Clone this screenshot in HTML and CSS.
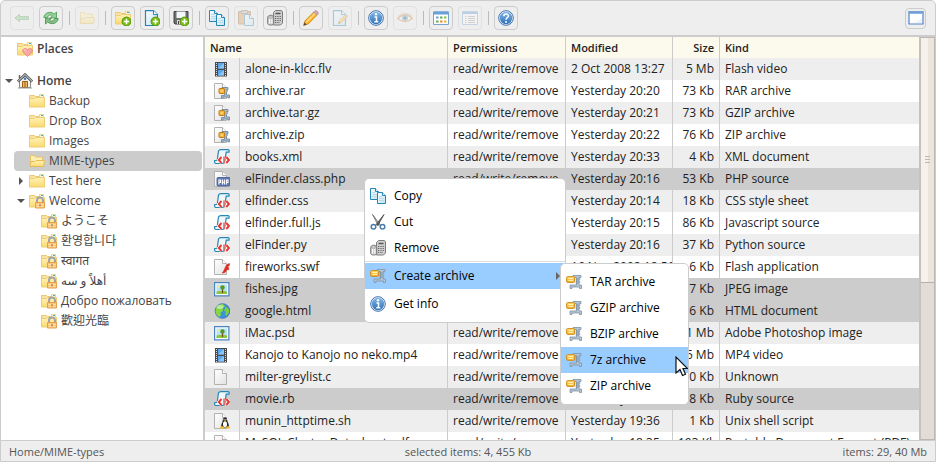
FILE: index.html
```html
<!DOCTYPE html>
<html lang="en">
<head>
<meta charset="utf-8">
<title>File manager</title>
<link rel="stylesheet" href="styles.css">
</head>
<body>
<svg class="sprite" width="0" height="0" aria-hidden="true">
  <defs>
    <linearGradient id="gFolder" x1="0" y1="0" x2="0" y2="1"><stop offset="0" stop-color="#fff2ba"/><stop offset="1" stop-color="#fcd96c"/></linearGradient>
    <linearGradient id="gBlue" x1="0" y1="0" x2="0" y2="1"><stop offset="0" stop-color="#85b8e6"/><stop offset="1" stop-color="#2b6fbb"/></linearGradient>
    <linearGradient id="gSheet" x1="0" y1="0" x2="1" y2="1"><stop offset="0" stop-color="#ffffff"/><stop offset="1" stop-color="#e2e2e2"/></linearGradient>
    <linearGradient id="gSheetBlue" x1="0" y1="0" x2="1" y2="1"><stop offset="0" stop-color="#ffffff"/><stop offset="1" stop-color="#bfe3f5"/></linearGradient>
    <linearGradient id="gOrange" x1="0" y1="0" x2="0" y2="1"><stop offset="0" stop-color="#ffdc70"/><stop offset="1" stop-color="#f6ab2c"/></linearGradient>
  </defs>
  <symbol id="folder" viewBox="0 0 16 16">
    <path d="M.5 13V2.500h5l1 1h8V13z" fill="#f9e3a0" stroke="#e9ca7c"/>
    <path d="M10.500 1.500h4v4h-4z" fill="#fff6d0" stroke="#ecd390"/>
    <path d="M12 2.500h2" stroke="#35b6c4"/>
    <path d="M.5 5.500h5l1-1h9v9.500H.5z" fill="url(#gFolder)" stroke="#efcd74"/>
  </symbol>
  <symbol id="folder-open" viewBox="0 0 16 16">
    <path d="M1.500 13V2.500h4l1 1.500h7V13z" fill="#fdeeb4" stroke="#e6c56c"/>
    <path d="M1 13.500l1-5h4l1-1h8.500l-1 6z" fill="url(#gFolder)" stroke="#e5bb58"/>
  </symbol>
  <symbol id="lock" viewBox="0 0 16 16">
    <path d="M8 10V7.500a3 3 0 0 1 6 0V10" fill="none" stroke="#9ea3a8" stroke-width="2"/>
    <path d="M6.500 9.500h9v5.500h-9z" fill="#f9c67a" stroke="#e3a050"/>
    <path d="M7.500 11.500h7M7.500 13.500h7" stroke="#fce0a8"/>
    <path d="M11 11v2.500" stroke="#9a6c30"/>
  </symbol>
  <symbol id="heart" viewBox="0 0 16 16">
    <path d="M10.500 15.500L6 11c-1.500-2.500 2-5 4.500-2.200C13 6 16.800 8.500 15 11z" fill="#f8a8a6" stroke="#e78482" stroke-width=".8"/>
    <path d="M7 9.500q1-1.500 2.500 0" fill="none" stroke="#ffd0d0"/>
  </symbol>
  <symbol id="home" viewBox="0 0 16 16">
    <path d="M2.500 14.500V8L8 3l5.500 5v6.500z" fill="#f3f1ea" stroke="#8a8a8a"/>
    <path d="M2.500 2v3" stroke="#666" stroke-width="1.500"/>
    <path d="M.8 8.500L8 1.500l7.200 7" fill="none" stroke="#555" stroke-width="2.600"/>
    <path d="M.8 8.500L8 1.500l7.200 7" fill="none" stroke="#e6e6e6" stroke-width="1"/>
    <path d="M5.500 14.500v-6h5v6z" fill="#f0b95d" stroke="#9a5f17"/><path d="M8 9v5" stroke="#9a5f17"/>
    <circle cx="8" cy="5.800" r="1.300" fill="#3c79c0"/>
    <path d="M1 15h14" stroke="#999"/>
  </symbol>
  <symbol id="plus" viewBox="0 0 16 16">
    <circle cx="11.500" cy="11.500" r="4.500" fill="#78bd10" stroke="#4b8a06" stroke-width=".8"/>
    <path d="M11.500 8.800v5.400M8.800 11.500h5.400" stroke="#fff" stroke-width="1.600"/>
  </symbol>
  <symbol id="back" viewBox="0 0 16 16">
    <path d="M1 8l4.500-3.500v2.200h9v2.600h-9v2.200z" fill="#8fd08f" stroke="#4f9a58"/>
  </symbol>
  <symbol id="reload" viewBox="0 0 16 16">
    <path d="M.8 7.500C1.500 2.500 7.500.8 11.300 4L13.500 2v5.800h-6l2-2C7.500 4.200 5 5 4.500 7.500z" fill="#9ad09a" stroke="#55a05e" stroke-width=".9"/>
    <path d="M15.200 8.500C14.500 13.500 8.500 15.200 4.700 12l-2.200 2V8.200h6l-2 2c2 1.600 4.500.8 5-1.700z" fill="#84c284" stroke="#4c9455" stroke-width=".9"/>
  </symbol>
  <symbol id="page-blue" viewBox="0 0 16 16">
    <path d="M1.500.6h8l4 4v10.900h-12z" fill="url(#gSheetBlue)" stroke="#2685b5" stroke-width="1.200"/>
    <path d="M9.500.6v4h4" fill="#fff" stroke="#2685b5"/>
  </symbol>
  <symbol id="floppy" viewBox="0 0 16 16">
    <path d="M1 1.500h14v12.500H2l-1-1z" fill="#6e6e6e" stroke="#444"/>
    <path d="M3.500 1.500h9V8h-9z" fill="#f2f7fa"/><path d="M4 10h7v4H4z" fill="#ddd"/><path d="M5.500 11v3" stroke="#444"/>
  </symbol>
  <symbol id="copy" viewBox="0 0 16 16">
    <path d="M.5.500h5l3 3v8h-8z" fill="url(#gSheetBlue)" stroke="#2685b5"/>
    <path d="M2 4.500h3M2 6.500h5M2 8.500h5" stroke="#b8dcec"/><path d="M5.500.500v3h3" fill="#fff" stroke="#2685b5"/>
    <path d="M7.500 4.500h5l3 3v8h-8z" fill="url(#gSheetBlue)" stroke="#2685b5"/>
    <path d="M9 8.500h3M9 10.500h5M9 12.500h5" stroke="#b8dcec"/><path d="M12.500 4.500v3h3" fill="#fff" stroke="#2685b5"/>
  </symbol>
  <symbol id="paste" viewBox="0 0 16 16">
    <path d="M.5 1.500h12v12.500H.5z" fill="#d99c55" stroke="#a06a30"/>
    <path d="M3.500.500h6v3h-6z" fill="#bbb" stroke="#777"/>
    <path d="M6.500 4.500h5l4 4v7h-9z" fill="url(#gSheetBlue)" stroke="#3b82ab"/><path d="M11.500 4.500v4h4" fill="#fff" stroke="#3b82ab"/>
  </symbol>
  <symbol id="remove" viewBox="0 0 16 16">
    <path d="M6.500 2.500l2-2h6l1 1.500v11l-2 2h-7z" fill="#cfcfcf" stroke="#7c7c7c"/>
    <path d="M8.500 3.500h5" stroke="#555" stroke-width="1.500"/>
    <path d="M8 6.500h6M8 8.500h6M8 10.500h6M8 12.500h5" stroke="#666" stroke-dasharray="1.300 1"/>
    <path d="M.7 7.500c0-3 6-3 6 0v6c0 2-6 2-6 0z" fill="#d2d2d2" stroke="#777"/>
    <ellipse cx="3.700" cy="7" rx="2.500" ry="1" fill="#eee" stroke="#888" stroke-width=".7"/>
    <path d="M2.500 9v4.500M4.800 9v4.500" stroke="#fff" stroke-width=".9"/>
  </symbol>
  <symbol id="pencil" viewBox="0 0 16 16">
    <path d="M.6 15.400l1.400-4.600L10.800 2l3.200 3.200-8.800 8.800z" fill="#ffb52e" stroke="#c98118" stroke-width=".8"/>
    <path d="M3.500 12L12 3.500" stroke="#ffe08a" stroke-width="1.200"/>
    <path d="M10.800 2l1.300-1.300c1-1 4.200 2.200 3.200 3.200L14 5.200z" fill="#e99aa8" stroke="#a8a8b4" stroke-width=".9"/>
    <path d="M.6 15.400l.9-3 2.100 2.100z" fill="#444"/>
  </symbol>
  <symbol id="info" viewBox="0 0 16 16">
    <circle cx="8" cy="8" r="7.300" fill="#fff" stroke="#3b6da8"/>
    <circle cx="8" cy="8" r="6.200" fill="url(#gBlue)"/>
    <path d="M6.500 7h2v4.500M6.300 11.700h4" fill="none" stroke="#fff" stroke-width="1.500"/><circle cx="8" cy="4.300" r="1.200" fill="#fff"/>
  </symbol>
  <symbol id="help" viewBox="0 0 16 16">
    <circle cx="8" cy="8" r="7.300" fill="#fff" stroke="#3b6da8"/>
    <circle cx="8" cy="8" r="6.200" fill="url(#gBlue)"/>
    <path d="M5.800 6.300c0-3 4.600-3 4.600-.3C10.400 7.600 8 7.600 8 9.700" fill="none" stroke="#fff" stroke-width="1.500"/><circle cx="8" cy="11.900" r="1" fill="#fff"/>
  </symbol>
  <symbol id="eye" viewBox="0 0 16 16">
    <path d="M.7 8.500q7.300-7.500 14.600 0-7.300 6-14.600 0z" fill="#fff" stroke="#d08a40" stroke-width="1.300"/>
    <path d="M1 6q7-5 14 0" fill="none" stroke="#e0b080"/>
    <circle cx="8" cy="8" r="3" fill="#6f9fc0"/><circle cx="8" cy="8" r="1.300" fill="#1f3f5a"/>
  </symbol>
  <symbol id="window" viewBox="0 0 16 16">
    <path d="M1 2h14v12H1z" fill="#fff" stroke="#5584c4" stroke-width="1.200"/>
    <path d="M1 2h14v2H1z" fill="#8db6e8"/><path d="M.5 2h15" stroke="#5584c4"/>
    <path d="M6 13l8-5v5z" fill="#edf2f9"/>
  </symbol>
  <symbol id="view-icons" viewBox="0 0 16 16">
    <path d="M.5 2h15v12.500H.5z" fill="#fff" stroke="#7aa3cf"/>
    <path d="M.5 1.500h15V4.500H.5z" fill="#6b9fd8"/>
    <path d="M3 6.500h2.500v2H3z" fill="#6a9edb"/><path d="M7 6.500h2.500v2H7zM3 10.500h2.500v2H3z" fill="#66b04c"/><path d="M11 6.500h2.500v2H11z" fill="#86bd4c"/><path d="M7 10.500h2.500v2H7z" fill="#f08a36"/><path d="M11 10.500h2.500v2H11z" fill="#e4b63c"/>
  </symbol>
  <symbol id="view-list" viewBox="0 0 16 16">
    <path d="M.5 2h15v12.500H.5z" fill="#fff" stroke="#7aa3cf"/><path d="M.5 1.500h15V4H.5z" fill="#5b92cf"/>
    <path d="M3 6.500h1.500M3 8.500h1.500M3 10.500h1.500M3 12.500h1.500M6 6.500h7M6 8.500h7M6 10.500h7M6 12.500h7" stroke="#999"/>
  </symbol>
  <symbol id="film" viewBox="0 0 16 16">
    <path d="M1 1h12v14.500H1z" fill="#4a4a4a"/>
    <path d="M4 2h6v5.500H4zM4 9h6v5.500H4z" fill="#58a6ee"/><path d="M4 7.500L10 2v5.500zM4 14.500L10 9v5.500z" fill="#8cc6f8"/>
    <path d="M2.500 2v13M11.500 2v13" stroke="#ddd" stroke-width="1" stroke-dasharray="1 1"/>
  </symbol>
  <symbol id="page" viewBox="0 0 16 16">
    <path d="M.5.500h8l4 4v11H.5z" fill="url(#gSheet)" stroke="#b2b2b2"/>
    <path d="M8.500.500v4h4" fill="#fff" stroke="#b2b2b2"/>
  </symbol>
  <symbol id="clamp" viewBox="0 0 16 16">
    <path d="M7 1.500h8v2h-2l1 1.500-1 1.500 1 1.500-1 1.500v1.500h2.500v3.500h-2V13H6v1.500H4V11h6.500V3.500H7z" fill="#b4c5d3" stroke="#7d93a6" stroke-width=".8"/>
    <path d="M9.500 5h3.500M9.500 7h3.500M9.500 9h3.500" stroke="#71889c" stroke-width=".8"/>
    <rect x=".6" y="2.600" width="8" height="5.800" rx="1" fill="url(#gOrange)" stroke="#d08f1e"/>
    <path d="M2.500 4.500h4.500M2.500 6.500h4.500" stroke="#fff3b0"/>
  </symbol>
  <symbol id="archive-file" viewBox="0 0 16 16">
    <use href="#page"/>
    <path d="M8 4.500h6v2h-1.500l1 1.500-1 1.500v2.500h3v3H14v-1H9v1H7.500v-2.500h3V6.500H8z" fill="#a9bccc" stroke="#6b8399" stroke-width=".8"/>
    <rect x="5" y="5.500" width="5.500" height="5" rx="1" fill="#f5b53a" stroke="#c07c10"/><path d="M6.500 8h2.500" stroke="#fff0a0"/>
  </symbol>
  <symbol id="script" viewBox="0 0 16 16">
    <path d="M4.500 2Q5 .6 7 .6h7q1.500 0 1 2.600h-2.800L11 11q-.5 3.500-3 3.500H2Q.2 14.500.7 11.500h2.500z" fill="#eef8fc" stroke="#2786b4" stroke-width="1.200"/>
    <path d="M7.500 8L4.800 11l2.700 3M12.300 8l2.700 3-2.700 3" fill="none" stroke="#fff" stroke-width="3.200"/>
    <path d="M7.500 8L4.800 11l2.700 3M12.300 8l2.700 3-2.700 3" fill="none" stroke="#e3362e" stroke-width="1.900"/>
    <path d="M10 7.500v7" stroke="#ee6a62" stroke-width="1.600"/>
  </symbol>
  <symbol id="php" viewBox="0 0 16 16">
    <use href="#page"/>
    <rect x="3" y="6.500" width="13" height="8.500" rx="1" fill="#6078b4" stroke="#405898" stroke-width=".8"/>
    <path d="M4.900 13.500v-4.500h1.600v2.500H4.900M8.400 8.500v5M10.400 8.500v5M8.400 11.300h2M12.400 13.500v-4.500H14v2.500h-1.600" fill="none" stroke="#fff" stroke-width="1.100"/>
  </symbol>
  <symbol id="swf" viewBox="0 0 16 16">
    <use href="#page"/>
    <path d="M15.500 4.500c-4.500.5-4 6-7.300 9.500 3 .5 4-2 4.600-3.300h2V8.500h-1c.3-1.200.9-1.900 1.700-2z" fill="#e52b20" stroke="#c82a22" stroke-width=".5"/>
  </symbol>
  <symbol id="image" viewBox="0 0 16 16">
    <path d="M.6 1.600h14.300v13.300H.6z" fill="#fff" stroke="#4a84be" stroke-width="1.200"/>
    <path d="M2.500 3.500h10.500v9.500H2.500z" fill="#b4e2f8"/><path d="M2.500 10.500q5-1.500 10.500 0V13H2.500z" fill="#8cc63c"/>
    <path d="M8.500 7.500v4.500" stroke="#754a18" stroke-width="1.200"/><circle cx="8.500" cy="6.500" r="2.200" fill="#5a9624"/><circle cx="4.500" cy="5.500" r="1" fill="#fff58a"/>
  </symbol>
  <symbol id="globe" viewBox="0 0 16 16">
    <circle cx="8.500" cy="8" r="7.300" fill="#3c90e0" stroke="#2f70b4" stroke-width=".8"/>
    <path d="M2.500 4Q5 .8 9 1l2 2-2.500 2.500L9 8 6.500 9.500 7 12l-1.500 2Q1.500 12 1.500 8z" fill="#86d840"/>
    <path d="M12 3.500l3 3v3L12.500 13 11 11l1-2-2-1.500z" fill="#78cf38"/>
    <ellipse cx="6" cy="4" rx="3.500" ry="2" fill="#fff" opacity=".45"/>
  </symbol>
  <symbol id="shell" viewBox="0 0 16 16">
    <use href="#page"/>
    <path d="M11 4.500c2.500 0 2 2.500 2.500 4 .7 1.500 2 3 1 6h-7c-1-2.500.6-4.500 1-6 .5-1.500 0-4 2.500-4z" fill="#25282b"/>
    <ellipse cx="11" cy="11.300" rx="2" ry="3" fill="#fff"/><path d="M9.800 7.500h2.500L11 9z" fill="#f4bd22"/>
    <ellipse cx="8" cy="14.500" rx="2" ry="1.200" fill="#f4bd22"/><ellipse cx="14" cy="14.500" rx="2" ry="1.200" fill="#f4bd22"/>
    <circle cx="10" cy="6.500" r=".6" fill="#fff"/><circle cx="12" cy="6.500" r=".6" fill="#fff"/>
  </symbol>
  <symbol id="pdf" viewBox="0 0 16 16">
    <use href="#page"/><path d="M4 14c3-3 5-6 4-9 1 5 3 7 6 7-4 0-7 1-10 2z" fill="none" stroke="#d7261d" stroke-width="1.500"/>
  </symbol>
  <symbol id="cut" viewBox="0 0 16 16">
    <path d="M2.500.5l7.500 10-1.800.8z" fill="#c5cacf" stroke="#666" stroke-width=".8"/>
    <path d="M14 .5L6.200 10.500l1.600 1z" fill="#5c6064" stroke="#444" stroke-width=".8"/>
    <circle cx="3.500" cy="12.800" r="2.300" fill="none" stroke="#4a7cab" stroke-width="1.500"/><circle cx="12.500" cy="12.800" r="2.300" fill="none" stroke="#4a7cab" stroke-width="1.500"/>
  </symbol>
</svg>

<div class="finder">
  <header class="toolbar">
    <div class="group">
      <button class="tool disabled" disabled aria-label="Back"><svg class="icon"><use href="#back"/></svg></button>
      <button class="tool" aria-label="Reload"><svg class="icon"><use href="#reload"/></svg></button>
    </div>
    <div class="group">
      <button class="tool disabled" disabled aria-label="Open"><svg class="icon"><use href="#folder-open"/></svg></button>
    </div>
    <div class="group">
      <button class="tool" aria-label="New folder"><svg class="icon"><use href="#folder"/><use href="#plus"/></svg></button>
      <button class="tool" aria-label="New file"><svg class="icon"><use href="#page-blue"/><use href="#plus"/></svg></button>
      <button class="tool" aria-label="Upload files"><svg class="icon"><use href="#floppy"/><use href="#plus"/></svg></button>
    </div>
    <div class="group">
      <button class="tool" aria-label="Copy"><svg class="icon"><use href="#copy"/></svg></button>
      <button class="tool disabled" disabled aria-label="Paste"><svg class="icon"><use href="#paste"/></svg></button>
      <button class="tool" aria-label="Remove"><svg class="icon"><use href="#remove"/></svg></button>
    </div>
    <div class="group">
      <button class="tool" aria-label="Rename"><svg class="icon"><use href="#pencil"/></svg></button>
      <button class="tool disabled" disabled aria-label="Edit text file"><svg class="icon"><use href="#page-blue"/><use href="#pencil" x="6" y="4" width="10" height="10"/></svg></button>
    </div>
    <div class="group">
      <button class="tool" aria-label="Get info"><svg class="icon"><use href="#info"/></svg></button>
      <button class="tool disabled" disabled aria-label="Preview"><svg class="icon"><use href="#eye"/></svg></button>
    </div>
    <div class="group">
      <button class="tool" aria-label="View as icons"><svg class="icon"><use href="#view-icons"/></svg></button>
      <button class="tool disabled" disabled aria-label="View as list"><svg class="icon"><use href="#view-list"/></svg></button>
    </div>
    <div class="group">
      <button class="tool" aria-label="Help"><svg class="icon"><use href="#help"/></svg></button>
    </div>
    <button class="tool dock" aria-label="Dock window"><svg class="icon"><use href="#window"/></svg></button>
  </header>

  <main class="workzone">
    <nav class="sidebar" aria-label="Folders">
      <ul class="tree places">
        <li><a href="#" class="node root"><span class="arrow"></span><svg class="icon"><use href="#folder"/><use href="#heart"/></svg>Places</a></li>
      </ul>
      <ul class="tree">
        <li><a href="#" class="node root"><span class="arrow open"></span><svg class="icon"><use href="#home"/></svg>Home</a>
          <ul>
            <li><a href="#" class="node"><span class="arrow"></span><svg class="icon"><use href="#folder"/></svg>Backup</a></li>
            <li><a href="#" class="node"><span class="arrow"></span><svg class="icon"><use href="#folder"/></svg>Drop Box</a></li>
            <li><a href="#" class="node"><span class="arrow"></span><svg class="icon"><use href="#folder"/></svg>Images</a></li>
            <li><a href="#" class="node current"><span class="arrow"></span><svg class="icon"><use href="#folder-open"/></svg>MIME-types</a></li>
            <li><a href="#" class="node"><span class="arrow closed"></span><svg class="icon"><use href="#folder"/></svg>Test here</a></li>
            <li><a href="#" class="node"><span class="arrow open"></span><svg class="icon"><use href="#folder"/><use href="#lock"/></svg>Welcome</a>
              <ul>
                <li><a href="#" class="node" lang="ja"><span class="arrow"></span><svg class="icon"><use href="#folder"/><use href="#lock"/></svg>ようこそ</a></li>
                <li><a href="#" class="node" lang="ko"><span class="arrow"></span><svg class="icon"><use href="#folder"/><use href="#lock"/></svg>환영합니다</a></li>
                <li><a href="#" class="node" lang="hi"><span class="arrow"></span><svg class="icon"><use href="#folder"/><use href="#lock"/></svg>स्वागत</a></li>
                <li><a href="#" class="node" lang="ar"><span class="arrow"></span><svg class="icon"><use href="#folder"/><use href="#lock"/></svg>أهلاً و سه</a></li>
                <li><a href="#" class="node" lang="ru"><span class="arrow"></span><svg class="icon"><use href="#folder"/><use href="#lock"/></svg>Добро пожаловать</a></li>
                <li><a href="#" class="node" lang="zh-Hant"><span class="arrow"></span><svg class="icon"><use href="#folder"/><use href="#lock"/></svg>歡迎光臨</a></li>
              </ul>
            </li>
          </ul>
        </li>
      </ul>
    </nav>

    <section class="files">
      <table>
        <colgroup><col class="c-icon"><col class="c-name"><col class="c-perm"><col class="c-date"><col class="c-size"><col></colgroup>
        <thead>
          <tr><th colspan="2">Name</th><th>Permissions</th><th>Modified</th><th class="size">Size</th><th>Kind</th></tr>
        </thead>
        <tbody>
          <tr><td><svg class="icon"><use href="#film"/></svg></td><td>alone-in-klcc.flv</td><td>read/write/remove</td><td>2 Oct 2008 13:27</td><td class="size">5 Mb</td><td>Flash video</td></tr>
          <tr><td><svg class="icon"><use href="#archive-file"/></svg></td><td>archive.rar</td><td>read/write/remove</td><td>Yesterday 20:20</td><td class="size">73 Kb</td><td>RAR archive</td></tr>
          <tr><td><svg class="icon"><use href="#archive-file"/></svg></td><td>archive.tar.gz</td><td>read/write/remove</td><td>Yesterday 20:21</td><td class="size">73 Kb</td><td>GZIP archive</td></tr>
          <tr><td><svg class="icon"><use href="#archive-file"/></svg></td><td>archive.zip</td><td>read/write/remove</td><td>Yesterday 20:22</td><td class="size">76 Kb</td><td>ZIP archive</td></tr>
          <tr><td><svg class="icon"><use href="#script"/></svg></td><td>books.xml</td><td>read/write/remove</td><td>Yesterday 20:33</td><td class="size">4 Kb</td><td>XML document</td></tr>
          <tr class="selected"><td><svg class="icon"><use href="#php"/></svg></td><td>elFinder.class.php</td><td>read/write/remove</td><td>Yesterday 20:16</td><td class="size">53 Kb</td><td>PHP source</td></tr>
          <tr><td><svg class="icon"><use href="#script"/></svg></td><td>elfinder.css</td><td>read/write/remove</td><td>Yesterday 20:14</td><td class="size">18 Kb</td><td>CSS style sheet</td></tr>
          <tr><td><svg class="icon"><use href="#script"/></svg></td><td>elfinder.full.js</td><td>read/write/remove</td><td>Yesterday 20:15</td><td class="size">86 Kb</td><td>Javascript source</td></tr>
          <tr><td><svg class="icon"><use href="#script"/></svg></td><td>elFinder.py</td><td>read/write/remove</td><td>Yesterday 20:16</td><td class="size">37 Kb</td><td>Python source</td></tr>
          <tr><td><svg class="icon"><use href="#swf"/></svg></td><td>fireworks.swf</td><td>read/write/remove</td><td>16 Nov 2008 18:56</td><td class="size">6 Kb</td><td>Flash application</td></tr>
          <tr class="selected"><td><svg class="icon"><use href="#image"/></svg></td><td>fishes.jpg</td><td>read/write/remove</td><td>Yesterday 20:16</td><td class="size">37 Kb</td><td>JPEG image</td></tr>
          <tr class="selected"><td><svg class="icon"><use href="#globe"/></svg></td><td>google.html</td><td>read/write/remove</td><td>Yesterday 20:16</td><td class="size">6 Kb</td><td>HTML document</td></tr>
          <tr><td><svg class="icon"><use href="#image"/></svg></td><td>iMac.psd</td><td>read/write/remove</td><td>Yesterday 20:16</td><td class="size">1 Mb</td><td>Adobe Photoshop image</td></tr>
          <tr><td><svg class="icon"><use href="#film"/></svg></td><td>Kanojo to Kanojo no neko.mp4</td><td>read/write/remove</td><td>Yesterday 20:16</td><td class="size">15 Mb</td><td>MP4 video</td></tr>
          <tr><td><svg class="icon"><use href="#page"/></svg></td><td>milter-greylist.c</td><td>read/write/remove</td><td>Yesterday 20:16</td><td class="size">30 Kb</td><td>Unknown</td></tr>
          <tr class="selected"><td><svg class="icon"><use href="#script"/></svg></td><td>movie.rb</td><td>read/write/remove</td><td>Yesterday 20:16</td><td class="size">8 Kb</td><td>Ruby source</td></tr>
          <tr><td><svg class="icon"><use href="#shell"/></svg></td><td>munin_httptime.sh</td><td>read/write/remove</td><td>Yesterday 19:36</td><td class="size">1 Kb</td><td>Unix shell script</td></tr>
          <tr><td><svg class="icon"><use href="#pdf"/></svg></td><td>MySQL Cluster Datasheet.pdf</td><td>read/write/remove</td><td>Yesterday 18:35</td><td class="size">193 Kb</td><td>Portable Document Format (PDF)</td></tr>
        </tbody>
      </table>
    </section>
    <div class="scrollbar" aria-hidden="true"><div class="thumb"><span class="grip"></span></div></div>
  </main>

  <footer class="statusbar">
    <span>Home/MIME-types</span>
    <span>selected items: 4, 455 Kb</span>
    <span>items: 29, 40 Mb</span>
  </footer>
</div>

<div class="menu context" role="menu">
  <button role="menuitem"><svg class="icon"><use href="#copy"/></svg>Copy</button>
  <button role="menuitem"><svg class="icon"><use href="#cut"/></svg>Cut</button>
  <button role="menuitem"><svg class="icon"><use href="#remove"/></svg>Remove</button>
  <div class="divided" role="presentation">
    <button role="menuitem" class="hover" aria-haspopup="true"><svg class="icon"><use href="#clamp"/></svg>Create archive<span class="more"></span></button>
  </div>
  <button role="menuitem"><svg class="icon"><use href="#info"/></svg>Get info</button>
</div>
<div class="menu submenu" role="menu">
  <button role="menuitem"><svg class="icon"><use href="#clamp"/></svg>TAR archive</button>
  <button role="menuitem"><svg class="icon"><use href="#clamp"/></svg>GZIP archive</button>
  <button role="menuitem"><svg class="icon"><use href="#clamp"/></svg>BZIP archive</button>
  <button role="menuitem" class="hover"><svg class="icon"><use href="#clamp"/></svg>7z archive</button>
  <button role="menuitem"><svg class="icon"><use href="#clamp"/></svg>ZIP archive</button>
</div>
<svg class="pointer" viewBox="0 0 13 21" aria-hidden="true"><path d="M1 1v16l4-3.500 2.500 6 3-1.300L8 12.500h4.500z" fill="#fff" stroke="#111" stroke-width="1.200"/></svg>
</body>
</html>
```
FILE: styles.css
```css
* { box-sizing: border-box; }

body {
  margin: 0;
  background: #fff;
  color: #222;
  font: 12px/20px "Open Sans", "Noto Sans", "Noto Sans CJK JP", "DejaVu Sans", sans-serif;
}

ul { margin: 0; padding: 0; list-style: none; }
button { font: inherit; color: inherit; }
a { color: inherit; text-decoration: none; }
.sprite { position: absolute; }
.icon { width: 16px; height: 16px; flex: none; display: block; }

.finder {
  display: flex;
  flex-direction: column;
  height: 100vh;
  border: 1px solid #ccc;
  border-radius: 5px 5px 0 0;
  background: #eee;
  overflow: hidden;
}

.toolbar {
  display: flex;
  align-items: center;
  height: 36px;
  flex: none;
  padding: 0 9px;
  border-bottom: 2px solid #ccc;
}
.group { display: flex; align-items: center; gap: 5px; }
.group + .group::before {
  content: "";
  width: 1px;
  height: 14px;
  margin-left: 6px;
  background: #bbb;
}
.tool {
  display: grid;
  place-items: center;
  width: 24px;
  height: 24px;
  padding: 0;
  border: 1px solid #ccc;
  border-radius: 4px;
  background: transparent;
}
.tool.disabled { border-color: #e0e0e0; }
.tool.disabled .icon { opacity: .35; }
.tool.dock { width: 21px; height: 21px; margin-left: auto; }

.workzone { display: flex; flex: 1; min-height: 0; background: #fff; }

.sidebar {
  width: 204px;
  flex: none;
  padding: 2px 1px 0 4px;
  border-right: 2px solid #ccc;
  color: #444;
  overflow: hidden;
}
.places { margin-bottom: 12px; }
.tree ul { padding-left: 9px; }
.tree ul ul { padding-left: 12px; }
.node {
  display: flex;
  align-items: center;
  height: 20px;
  gap: 4px;
  border-radius: 4px;
  white-space: nowrap;
}
.node.root { font-weight: 600; }
.node.current { background: #ccc; }
.arrow { display: flex; align-items: center; justify-content: flex-end; width: 11px; flex: none; }
.root .arrow { width: 8px; }
.arrow.open::before {
  content: "";
  border: 4px solid transparent;
  border-top-color: #555;
  border-bottom: 0;
}
.arrow.closed::before {
  content: "";
  margin-right: 2px;
  border: 4px solid transparent;
  border-left-color: #555;
  border-right: 0;
}

.files { flex: 1; min-width: 0; overflow: hidden; }
table { width: 100%; border-collapse: separate; border-spacing: 0; table-layout: fixed; }
.c-icon { width: 35px; }
.c-name { width: 208px; }
.c-perm { width: 118px; }
.c-date { width: 107px; }
.c-size { width: 47px; }
th, td {
  height: 22px;
  padding: 0 5px;
  border-right: 1px solid #ccc;
  text-align: left;
  line-height: 20px;
  white-space: nowrap;
  overflow: hidden;
}
th { height: 21px; background: #fcf9ed; font-size: 11px; font-weight: 600; }
th:last-child, td:last-child { border-right: 0; }
th.size, td.size { text-align: right; }
td:first-child { padding-left: 9px; }
tbody tr:nth-child(odd) { background: #eee; }
tbody tr.selected { background: #ccc; }

.scrollbar {
  width: 16px;
  flex: none;
  border: 1px solid #bbb6b0;
  border-left: 2px solid #c5c2be;
  background: #e1dcd5;
}
.thumb {
  display: grid;
  place-items: center;
  height: 61%;
  border-bottom: 1px solid #b5afa7;
  background: linear-gradient(90deg, #f6f1eb 50%, #ebe5de 50%);
}
.grip {
  width: 5px;
  height: 7px;
  border: solid #bcb6ae;
  border-width: 1px 0;
  background: linear-gradient(#bcb6ae, #bcb6ae) center / 5px 1px no-repeat;
}

.statusbar {
  display: grid;
  grid-template-columns: 1fr auto 1fr;
  align-items: center;
  flex: none;
  height: 21px;
  padding: 1px 8px 0;
  border-top: 1px solid #ccc;
  color: #555;
  font-size: 11px;
}
.statusbar span:last-child { text-align: right; }

.menu {
  position: absolute;
  padding: 4px 0;
  border: 1px solid #ccc;
  border-radius: 5px;
  background: #fff;
  color: #000;
}
.context { left: 364px; top: 178px; width: 202px; padding-bottom: 5px; }
.submenu { left: 560px; top: 263px; width: 129px; padding: 5px 0; }
.menu button {
  display: flex;
  align-items: center;
  gap: 8px;
  width: 100%;
  height: 26px;
  padding: 0 5px;
  border: 0;
  background: transparent;
  text-align: left;
  white-space: nowrap;
}
.menu button.hover { background: #9cf; }
.divided { margin-bottom: 2px; padding-top: 1px; border-top: 1px solid #ddd; }
.more {
  margin-left: auto;
  border: 4px solid transparent;
  border-left-color: #666;
  border-right: 0;
}
.pointer { position: absolute; left: 675px; top: 356px; width: 13px; height: 21px; }
```
